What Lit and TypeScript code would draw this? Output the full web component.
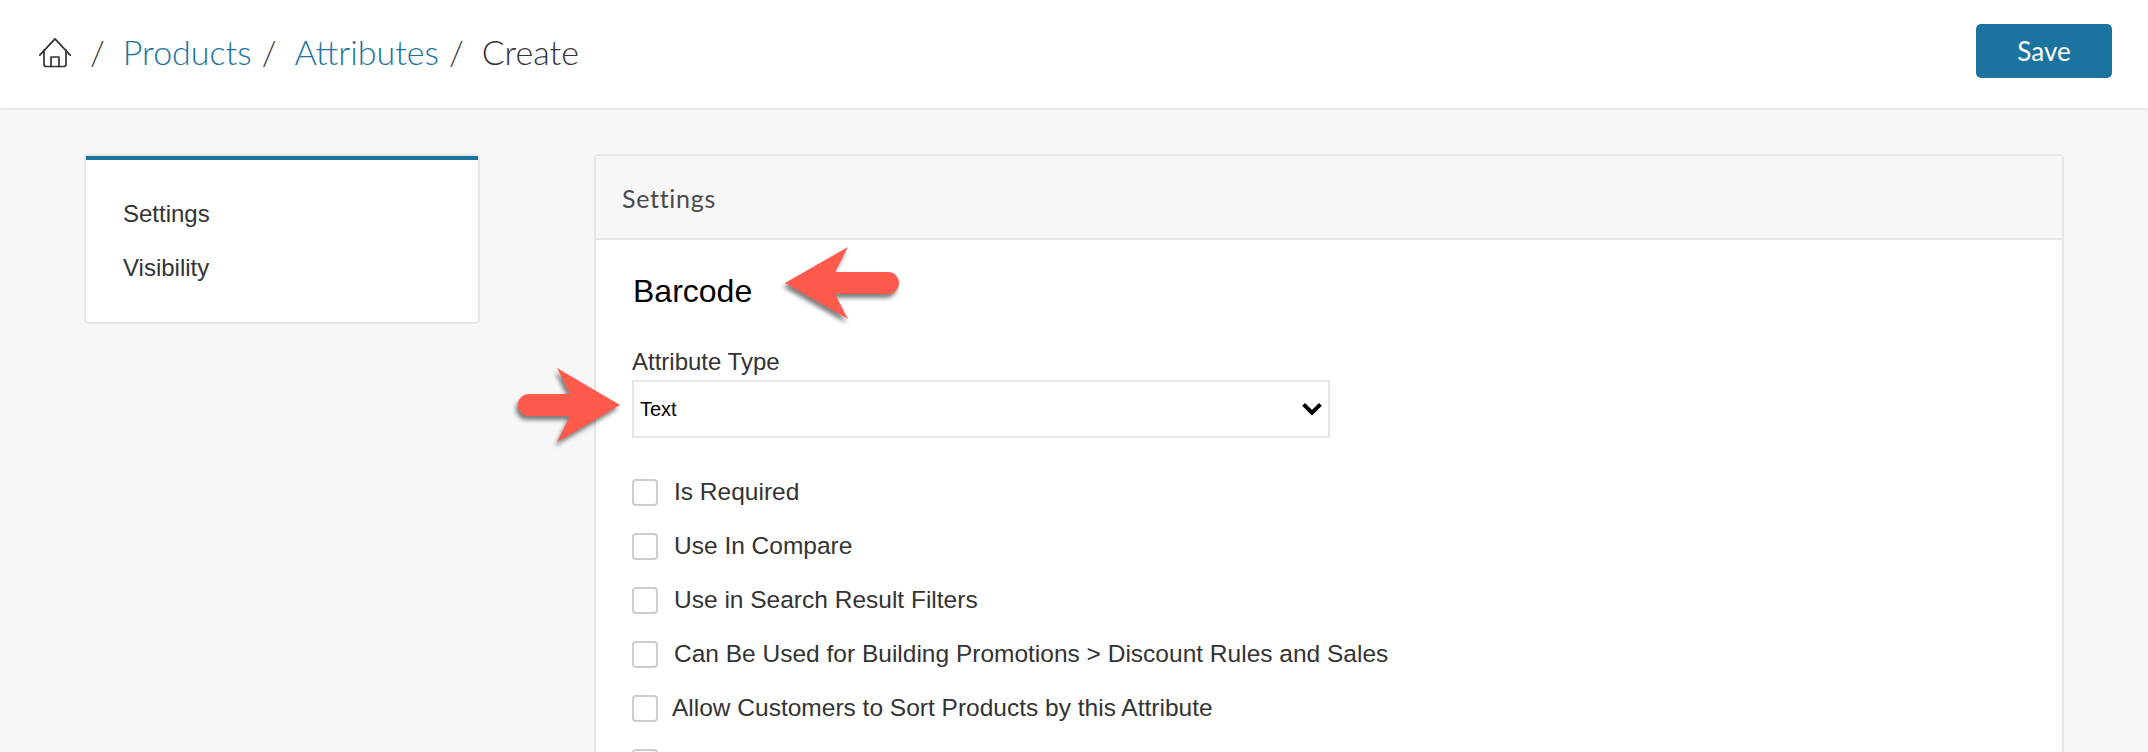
import { LitElement, html, css, svg } from "lit";
import { customElement } from "lit/decorators.js";

const OPTIONS = [
  "Is Required",
  "Use In Compare",
  "Use in Search Result Filters",
  "Can Be Used for Building Promotions > Discount Rules and Sales",
  "Allow Customers to Sort Products by this Attribute",
  "",
];

const homeIcon = svg`
  <path d="M.8 17.2 16 .8l15.2 16.4" />
  <path d="M5 12v14.2c0 1.6.9 2.3 2.3 2.3h17.4c1.4 0 2.3-.7 2.3-2.3V12" />
  <path d="M12 28.5V19h8v9.5" />
`;

@customElement("app-root")
export class AppRoot extends LitElement {
  render() {
    return html`
      <header class="topbar">
        <nav class="crumbs">
          <svg class="home" width="32" height="30" viewBox="0 0 32 30">${homeIcon}</svg>
          <span class="sep first">/</span>
          <a class="link">Products</a>
          <span class="sep">/</span>
          <a class="link">Attributes</a>
          <span class="sep">/</span>
          <span class="current">Create</span>
        </nav>
        <button class="save">Save</button>
      </header>

      <div class="page">
        <aside class="side">
          <div class="side-rule"></div>
          <div class="side-item">Settings</div>
          <div class="side-item">Visibility</div>
        </aside>

        <section class="panel">
          <div class="panel-head">Settings</div>
          <div class="panel-body">
            <h2 class="title">Barcode</h2>
            <label class="field-label">Attribute Type</label>
            <div class="select-wrap">
              <select class="select"><option>Text</option></select>
              <svg class="chevron" width="20" height="14" viewBox="0 0 20 14">
                <path d="M1.6 2.4 10 10.6l8.4-8.2" />
              </svg>
            </div>
            <div class="checks">
              ${OPTIONS.map(
                (text, i) => html`
                  <label class="check">
                    <input type="checkbox" />
                    <span class=${i === 4 ? "tight" : ""}>${text}</span>
                  </label>
                `
              )}
            </div>
          </div>
        </section>
      </div>

      <svg class="arrow arrow-left" width="130" height="90" viewBox="0 0 130 90">
        <path d="M5 43 68 7 55 32H108a11 11 0 0 1 0 22H55L68 79Z" />
      </svg>
      <svg class="arrow arrow-right" width="120" height="90" viewBox="0 0 120 90">
        <path d="M107 42 44 5 57 31H16a11 11 0 0 0 0 22H57L44 79Z" />
      </svg>
    `;
  }

  static styles = css`
    :host {
      display: block;
      position: relative;
      height: 752px;
      overflow: hidden;
      background: #f7f7f7;
      color: #333;
      font-family: "Liberation Sans", Arial, sans-serif;
      font-size: 24px;
    }

    .topbar {
      display: flex;
      align-items: center;
      justify-content: space-between;
      box-sizing: border-box;
      height: 108px;
      padding: 0 36px 0 39px;
      background: #fff;
      box-shadow: 0 1px 3px rgba(0, 0, 0, 0.12);
    }
    .crumbs {
      display: flex;
      align-items: center;
      margin-top: -2px;
      font-family: Lato, sans-serif;
      font-size: 34px;
      font-weight: 300;
      line-height: 40px;
    }
    .crumbs a,
    .crumbs span {
      margin-top: -2px;
    }
    .home {
      fill: none;
      stroke: #333;
      stroke-width: 1.7;
      stroke-linecap: round;
      stroke-linejoin: round;
    }
    .crumbs .sep {
      margin: -2px 18px 0 10px;
      color: #333;
    }
    .crumbs .sep.first {
      margin: -2px 18px 0 19px;
    }
    .link {
      color: #1b74a0;
    }
    .save {
      width: 136px;
      height: 54px;
      margin-bottom: 6px;
      border: 0;
      border-radius: 5px;
      background: #1b74a0;
      color: #fff;
      font-family: Lato, sans-serif;
      font-size: 26px;
    }

    .page {
      display: grid;
      grid-template-columns: 396px 1470px;
      column-gap: 114px;
      align-items: start;
      padding: 46px 84px 0;
    }

    .side {
      box-sizing: border-box;
      height: 170px;
      padding: 0 37px;
      background: #fff;
      border: 2px solid #e6e6e6;
      border-radius: 5px;
    }
    .side-rule {
      height: 4px;
      margin: 0 -37px 27px;
      background: #1b74a0;
    }
    .side-item {
      line-height: 54px;
    }

    .panel {
      background: #fff;
      border: 2px solid #e6e6e6;
      border-radius: 5px;
    }
    .panel-head {
      box-sizing: border-box;
      height: 84px;
      padding-left: 26px;
      background: #f7f7f7;
      border-bottom: 2px solid #e6e6e6;
      color: #4a4a4a;
      font-family: Lato, sans-serif;
      font-size: 25px;
      letter-spacing: 0.7px;
      line-height: 84px;
    }
    .panel-body {
      padding: 31px 36px 0;
    }
    .title {
      margin: 0 0 36px 1px;
      color: #000;
      font-size: 32px;
      font-weight: 400;
      line-height: 40px;
    }
    .field-label {
      display: block;
      margin-bottom: 3px;
      line-height: 30px;
    }
    .select-wrap {
      position: relative;
      width: 698px;
      height: 58px;
      margin-bottom: 27px;
    }
    .select {
      appearance: none;
      box-sizing: border-box;
      width: 100%;
      height: 100%;
      padding: 0 0 0 6px;
      background: #fff;
      border: 2px solid #e6e6e6;
      border-radius: 0;
      color: #000;
      font-family: "Liberation Sans", Arial, sans-serif;
      font-size: 20px;
    }
    .chevron {
      position: absolute;
      top: 22px;
      right: 8px;
      fill: none;
      stroke: #000;
      stroke-width: 4;
    }

    .checks {
      display: flex;
      flex-direction: column;
    }
    .check {
      display: flex;
      align-items: center;
      gap: 16px;
      height: 54px;
      font-size: 24.5px;
    }
    .check input {
      appearance: none;
      flex: none;
      box-sizing: border-box;
      width: 26px;
      height: 27px;
      margin: 0;
      background: #fff;
      border: 2px solid #cdcdcd;
      border-radius: 4px;
    }
    .check .tight {
      margin-left: -2px;
    }

    .arrow {
      position: absolute;
      fill: #ff5a4c;
      filter: drop-shadow(-2px 4px 2px rgba(0, 0, 0, 0.5));
    }
    .arrow-left {
      top: 240px;
      left: 780px;
    }
    .arrow-right {
      top: 363px;
      left: 513px;
    }
  `;
}
